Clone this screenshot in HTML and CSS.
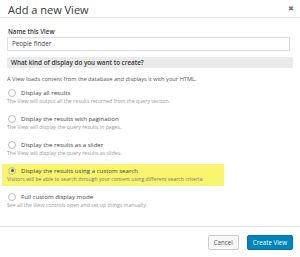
FILE: index.html
```html
<!DOCTYPE html>
<html lang="en">
<head>
    <meta charset="UTF-8">
    <title>Add a new View</title>
    <link rel="stylesheet" href="styles.css">
</head>
<body>

<div class="dialog">
    <div class="dialog-header">
        <span class="dialog-title">Add a new View</span>
        <span class="close">&#x2716;</span>
    </div>

    <div class="dialog-body">
        <label class="field-label">Name this View</label>
        <div class="text-input">People finder</div>

        <div class="section-title">What kind of display do you want to create?</div>
        <p class="intro">A View loads content from the database and displays it with your HTML.</p>

        <div class="option">
            <div class="option-label"><span class="radio"></span>Display all results</div>
            <div class="option-desc">The View will output all the results returned from the query section.</div>
        </div>
        <div class="option">
            <div class="option-label"><span class="radio"></span>Display the results with pagination</div>
            <div class="option-desc">The View will display the query results in pages.</div>
        </div>
        <div class="option">
            <div class="option-label"><span class="radio"></span>Display the results as a slider</div>
            <div class="option-desc">The View will display the query results as slides.</div>
        </div>
        <div class="option selected">
            <div class="option-label"><span class="radio checked"></span>Display the results using a custom search</div>
            <div class="option-desc">Visitors will be able to search through your content using different search criteria.</div>
        </div>
        <div class="option">
            <div class="option-label"><span class="radio"></span>Full custom display mode</div>
            <div class="option-desc">See all the View controls open and set up things manually.</div>
        </div>
    </div>

    <div class="dialog-footer">
        <button class="btn">Cancel</button>
        <button class="btn btn-primary">Create View</button>
    </div>
</div>

</body>
</html>
```

FILE: styles.css
```css
body {
    margin: 0;
    background-color: #fff;
    font-family: 'Open Sans', sans-serif;
    color: #444;
}
.dialog {
    width: 300px;
    height: 257px;
    display: flex;
    flex-direction: column;
}
.dialog-header {
    height: 17px;
    border-bottom: 1px solid #e5e5e5;
    display: flex;
    align-items: center;
    justify-content: space-between;
    padding: 0 6px 0 8px;
}
.dialog-title {
    font-size: 11px;
    color: #32373c;
    margin-top: 1px;
}
.close {
    font-size: 7px;
    color: #777;
}
.dialog-body {
    padding: 9px 7px 0 7px;
    flex: 1;
}
.field-label {
    display: block;
    font-size: 6.2px;
    font-weight: 600;
    color: #32373c;
    padding-left: 1px;
    line-height: 9px;
}
.text-input {
    height: 12px;
    border: 1px solid #ddd;
    margin-top: 1px;
    margin-right: 3px;
    font-size: 6.3px;
    line-height: 12px;
    padding-left: 4px;
    color: #444;
}
.section-title {
    background-color: #eaeaea;
    margin-top: 6px;
    height: 11px;
    line-height: 11px;
    font-size: 6.3px;
    font-weight: 600;
    color: #32373c;
    padding-left: 4px;
}
.intro {
    font-size: 5.7px;
    margin: 7px 0 2px 0;
    line-height: 9px;
    color: #555;
}
.option {
    padding: 2px 0 3px 0;
    margin: 0 -5px 4px -5px;
    padding-left: 5px;
}
.option-label {
    display: flex;
    align-items: center;
    font-size: 6.1px;
    line-height: 9px;
    color: #444;
}
.radio {
    width: 8px;
    height: 8px;
    border: 1px solid #bbb;
    border-radius: 50%;
    margin: 0 5px 0 1px;
    display: inline-flex;
    align-items: center;
    justify-content: center;
    box-sizing: border-box;
}
.radio.checked::after {
    content: '';
    width: 3px;
    height: 3px;
    border-radius: 50%;
    background-color: #555;
}
.option-desc {
    font-size: 5.2px;
    line-height: 8px;
    color: #999;
}
.option.selected {
    background-color: #f9f46e;
    width: 217px;
}
.option.selected .option-desc {
    color: #777;
}
.dialog-footer {
    border-top: 1px solid #e5e5e5;
    display: flex;
    justify-content: flex-end;
    gap: 8px;
    padding: 8px 7px 7px 0;
}
.btn {
    font-family: 'Open Sans', sans-serif;
    font-size: 6.2px;
    height: 15px;
    padding: 0 5px;
    border: 1px solid #ccc;
    border-radius: 2px;
    background-color: #f7f7f7;
    color: #555;
}
.btn-primary {
    background-color: #0085ba;
    border-color: #0073aa;
    color: #fff;
}
```
